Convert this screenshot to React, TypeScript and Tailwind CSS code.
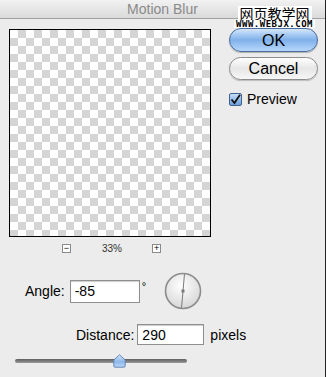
import React from "react";

const font = { fontFamily: '"Liberation Sans", Arial, sans-serif' };

function Dial() {
  // angle -85 deg: line through centre, almost vertical
  const a = (85 * Math.PI) / 180;
  const r = 17;
  const dx = Math.cos(a) * r;
  const dy = Math.sin(a) * r;
  return (
    <svg width="38" height="38" viewBox="0 0 38 38">
      <defs>
        <radialGradient id="dialFill" cx="45%" cy="35%" r="70%">
          <stop offset="0%" stopColor="#ffffff" />
          <stop offset="100%" stopColor="#d4d4d4" />
        </radialGradient>
      </defs>
      <circle cx="19" cy="19" r="17.5" fill="url(#dialFill)" stroke="#8c8c8c" strokeWidth="1.6" />
      <line x1={19 + dx} y1={19 - dy} x2={19 - dx} y2={19 + dy} stroke="#7a7a7a" strokeWidth="1" />
      <rect x="17.5" y="17.5" width="3" height="3" fill="#7a7a7a" />
    </svg>
  );
}

function SliderThumb() {
  return (
    <svg width="13" height="14" viewBox="0 0 13 14">
      <defs>
        <linearGradient id="thumb" x1="0" y1="0" x2="0" y2="1">
          <stop offset="0%" stopColor="#d8e8fb" />
          <stop offset="55%" stopColor="#8fb8ea" />
          <stop offset="100%" stopColor="#b9d6f8" />
        </linearGradient>
      </defs>
      <path d="M6.5 0.8 L12.2 6 L12.2 12 Q12.2 13.2 11 13.2 L2 13.2 Q0.8 13.2 0.8 12 L0.8 6 Z" fill="url(#thumb)" stroke="#5a7fae" strokeWidth="0.9" />
    </svg>
  );
}

export default function App() {
  return (
    <div className="flex h-[377px] w-[329px] bg-white" style={font}>
      <div className="relative flex h-full w-[326px] flex-col border-r border-[#222] bg-[#ececec]">
        {/* title bar */}
        <div className="flex h-[19px] items-center justify-center border-b border-[#a3a3a3] bg-gradient-to-b from-[#f2f2f2] to-[#dadada]">
          <span className="text-[14px] leading-none text-[#8a8a8a]">Motion Blur</span>
        </div>

        {/* watermark */}
        <div className="absolute right-[10px] top-[6px] flex flex-col items-center">
          <span className="bg-white px-[2px] text-[14px] leading-[14px] text-black" style={{ fontFamily: '"Noto Sans CJK SC", sans-serif' }}>
            网页教学网
          </span>
          <span className="bg-white px-[2px] text-[9px] font-bold leading-[8px] tracking-[0.5px] text-black" style={{ fontFamily: '"DejaVu Sans Mono", monospace' }}>
            WWW.WEBJX.COM
          </span>
        </div>

        {/* preview + buttons */}
        <div className="flex items-start pl-[9px] pt-[10px]">
          <div className="flex w-[202px] flex-col">
            <div className="h-[208px] border border-black bg-[conic-gradient(#d5d5d5_25%,#ffffff_0_50%,#d5d5d5_0_75%,#ffffff_0)] bg-size-[16px_16px]" />
            <div className="mt-[7px] flex h-[9px] items-center">
              <div className="ml-[53px] flex h-[9px] w-[9px] items-center justify-center border border-[#8a8a8a] bg-white text-[9px] leading-none text-black">
                −
              </div>
              <span className="ml-[31px] text-[10px] leading-none text-[#333]">33%</span>
              <div className="ml-[30px] flex h-[9px] w-[9px] items-center justify-center border border-[#8a8a8a] bg-white text-[9px] leading-none text-black">
                +
              </div>
            </div>
          </div>

          <div className="ml-[18px] mt-[-1px] flex w-[89px] flex-col">
            <div className="flex h-[24px] items-center justify-center rounded-full border border-[#4a6c9c] bg-gradient-to-b from-[#d4e6fc] via-[#7fb0ea] to-[#b7d8fb] pt-[2px] text-[16px] leading-none text-black shadow-[0_1px_1px_rgba(0,0,0,0.25)]">
              OK
            </div>
            <div className="mt-[5px] flex h-[23px] items-center justify-center rounded-full border border-[#8c8c8c] bg-gradient-to-b from-[#ffffff] via-[#e6e6e6] to-[#f7f7f7] text-[16px] leading-none text-black shadow-[0_1px_1px_rgba(0,0,0,0.2)]">
              Cancel
            </div>
            <div className="mt-[12px] flex items-center">
              <div className="flex h-[13px] w-[13px] items-center justify-center rounded-[2px] border border-[#40618f] bg-gradient-to-b from-[#c6ddf8] to-[#6c9fdc]">
                <svg width="11" height="11" viewBox="0 0 11 11">
                  <path d="M1.5 5.5 L4.5 9 L10 0.8" fill="none" stroke="#111" strokeWidth="1.8" />
                </svg>
              </div>
              <span className="ml-[5px] text-[14px] leading-none text-black">Preview</span>
            </div>
          </div>
        </div>

        {/* angle row */}
        <div className="mt-[19px] flex items-center pl-[25px]">
          <span className="text-[14px] leading-none text-black">Angle:</span>
          <div className="ml-[5px] flex h-[23px] w-[70px] items-center border border-[#8f8f8f] bg-white px-[4px] text-[14px] leading-none text-black shadow-[inset_0_1px_1px_rgba(0,0,0,0.2)]">
            -85
          </div>
          <span className="mb-[10px] ml-[2px] text-[11px] leading-none text-black">°</span>
          <div className="ml-[18px]">
            <Dial />
          </div>
        </div>

        {/* distance row */}
        <div className="mt-[14px] flex items-center pl-[76px]">
          <span className="text-[14px] leading-none text-black">Distance:</span>
          <div className="ml-[3px] flex h-[21px] w-[67px] items-center border border-[#8f8f8f] bg-white px-[4px] text-[14px] leading-none text-black shadow-[inset_0_1px_1px_rgba(0,0,0,0.2)]">
            290
          </div>
          <span className="ml-[6px] text-[14px] leading-none text-black">pixels</span>
        </div>

        {/* slider */}
        <div className="relative ml-[15px] mt-[9px] flex h-[14px] w-[172px] items-center">
          <div className="h-[4px] w-full rounded-full bg-gradient-to-b from-[#5e5e5e] to-[#9a9a9a]" />
          <div className="absolute left-[98px] top-0">
            <SliderThumb />
          </div>
        </div>
      </div>
    </div>
  );
}
